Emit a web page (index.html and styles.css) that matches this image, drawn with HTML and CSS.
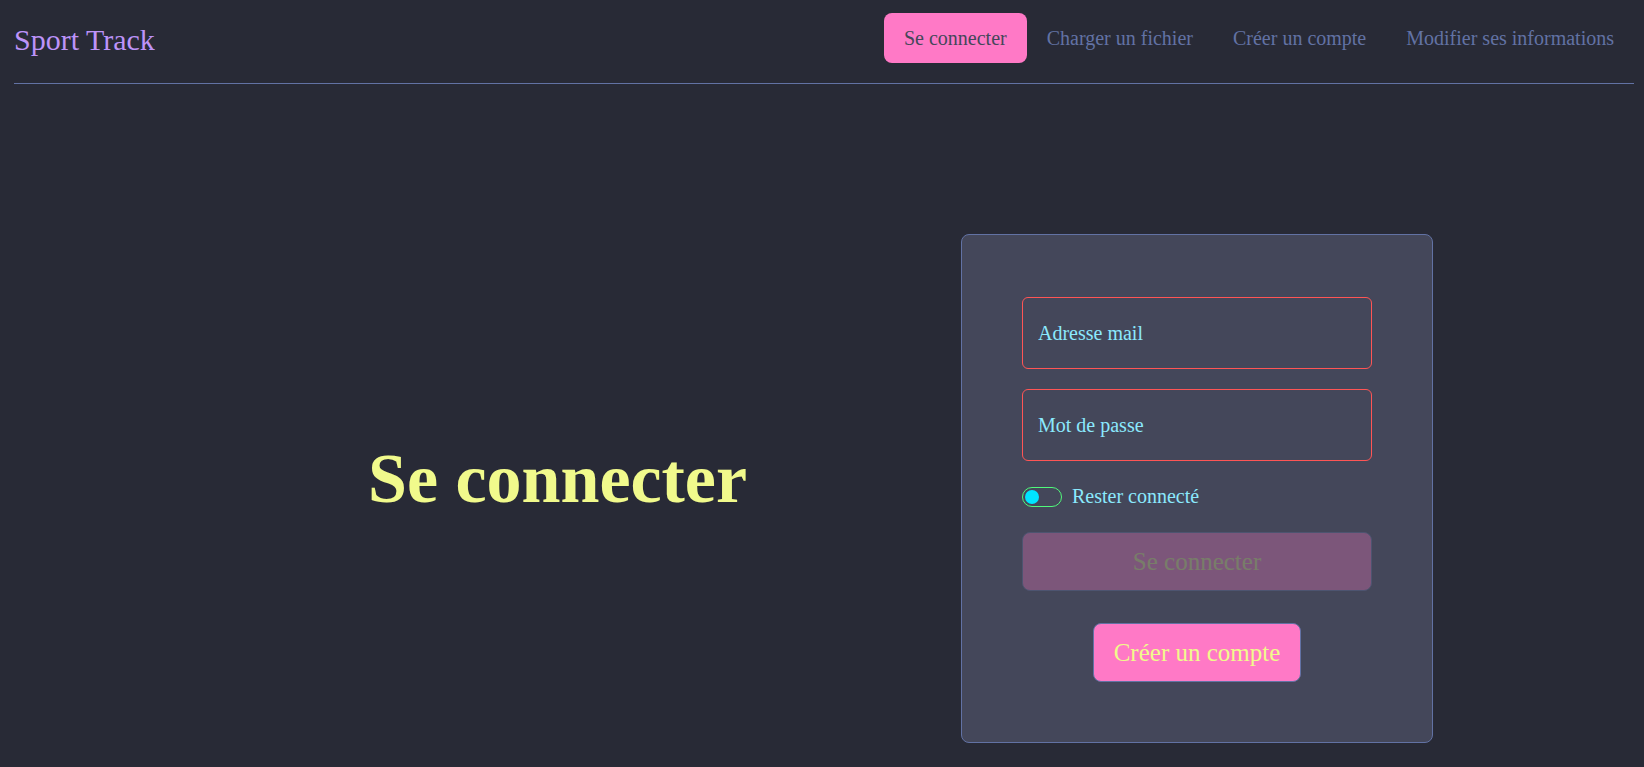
FILE: index.html
```html
<!DOCTYPE html>
<html lang="fr">
<head>
<meta charset="utf-8">
<title>Sport Track - Se connecter</title>
<link rel="stylesheet" href="styles.css">
</head>
<body>
<header class="site-header">
  <div class="logo">Sport Track</div>
  <nav class="nav">
    <a class="nav-link nav-link--active" href="#">Se connecter</a>
    <a class="nav-link" href="#">Charger un fichier</a>
    <a class="nav-link" href="#">Créer un compte</a>
    <a class="nav-link" href="#">Modifier ses informations</a>
  </nav>
</header>
<main class="main">
  <section class="intro">
    <h1 class="title">Se connecter</h1>
  </section>
  <form class="card">
    <input class="field" type="email" placeholder="Adresse mail">
    <input class="field" type="password" placeholder="Mot de passe">
    <label class="remember">
      <span class="switch"><span class="knob"></span></span>
      <span class="remember-text">Rester connecté</span>
    </label>
    <button class="btn-submit" type="button" disabled>Se connecter</button>
    <button class="btn-create" type="button">Créer un compte</button>
  </form>
</main>
</body>
</html>
```
FILE: styles.css
```css
html, body {
  margin: 0;
  padding: 0;
}
body {
  background: #282a36;
  font-family: "Liberation Serif", "Times New Roman", serif;
  min-height: 767px;
}
.site-header {
  display: flex;
  justify-content: space-between;
  align-items: center;
  margin: 0 10px 0 14px;
  padding: 13px 0 20px;
  border-bottom: 1px solid #6272a4;
}
.logo {
  color: #bd93f9;
  font-size: 30px;
  padding-top: 4px;
}
.nav {
  display: flex;
  align-items: center;
}
.nav-link {
  display: block;
  height: 50px;
  line-height: 50px;
  padding: 0 20px;
  font-size: 20px;
  color: #6272a4;
  text-decoration: none;
  border-radius: 8px;
}
.nav-link--active {
  background: #ff79c6;
  color: #44475a;
}
.main {
  display: flex;
  align-items: center;
  padding: 150px 211px 0 154px;
}
.intro {
  flex: 1;
  text-align: center;
}
.title {
  margin: 0 0 19px;
  color: #f1fa8c;
  font-size: 70px;
  font-weight: bold;
}
.card {
  box-sizing: border-box;
  width: 472px;
  background: #44475a;
  border: 1px solid #6272a4;
  border-radius: 8px;
  padding: 62px 60px 60px;
  display: flex;
  flex-direction: column;
}
.field {
  box-sizing: border-box;
  width: 100%;
  height: 72px;
  margin: 0 0 20px;
  padding: 0 15px;
  background: transparent;
  border: 1px solid #ff5555;
  border-radius: 6px;
  font-family: inherit;
  font-size: 20px;
  color: #8be9fd;
  outline: none;
}
.field::placeholder {
  color: #8be9fd;
  opacity: 1;
}
.field + .remember {
  margin-top: 4px;
}
.remember {
  display: flex;
  align-items: center;
  gap: 10px;
  height: 23px;
  margin-bottom: 24px;
}
.switch {
  box-sizing: border-box;
  width: 40px;
  height: 20px;
  border: 1.5px solid #50fa7b;
  border-radius: 10px;
  display: flex;
  align-items: center;
  padding-left: 1.5px;
}
.knob {
  width: 14px;
  height: 14px;
  border-radius: 50%;
  background: #00e5ff;
}
.remember-text {
  color: #8be9fd;
  font-size: 20px;
}
.btn-submit {
  box-sizing: border-box;
  width: 100%;
  height: 59px;
  background: #ff79c6;
  color: #f1fa8c;
  border: 1px solid #6272a4;
  border-radius: 8px;
  font-family: inherit;
  font-size: 25px;
  opacity: 0.3;
}
.btn-create {
  box-sizing: border-box;
  align-self: center;
  height: 59px;
  margin-top: 32px;
  padding: 0 20px;
  background: #ff79c6;
  color: #f1fa8c;
  border: 1px solid #6272a4;
  border-radius: 8px;
  font-family: inherit;
  font-size: 25px;
}
```
